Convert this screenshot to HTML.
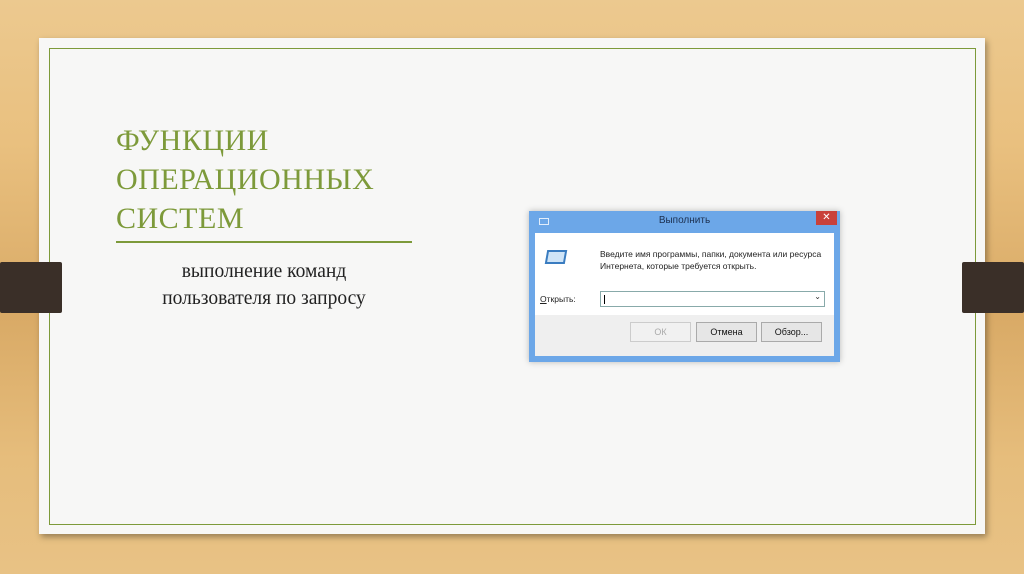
<!DOCTYPE html>
<html><head><meta charset="utf-8"><style>
body{margin:0;width:1024px;height:574px;overflow:hidden;position:relative;
background:linear-gradient(180deg,#ecc98f 0%,#e9c07f 25%,#d9aa66 55%,#e6bd7c 80%,#e8c285 100%);font-family:"Liberation Serif",serif}
.paper{position:absolute;left:39px;top:38px;width:946px;height:496px;background:#f7f7f6;box-shadow:2px 3px 6px rgba(0,0,0,.35)}
.inner{position:absolute;left:49px;top:48px;width:925px;height:475px;border:1.5px solid #7d9a3a}
.strap{position:absolute;top:262px;height:51px;width:62px;background:#3a2f28;border-radius:2px}
.title{position:absolute;left:116px;top:121px;color:#7d9a3a;font-size:30px;line-height:39px;letter-spacing:0.5px}
.rule{position:absolute;left:116px;top:241px;width:296px;height:2px;background:#7d9a3a}
.sub{position:absolute;left:116px;width:296px;top:258px;text-align:center;font-size:19.5px;line-height:27px;color:#222}
.dlg{position:absolute;left:529px;top:211px;width:311px;height:151px;background:#6ca7e8;box-shadow:0 0 6px rgba(0,0,0,.25);font-family:"Liberation Sans",sans-serif}
.body{position:absolute;left:6px;top:22px;width:299px;height:123px;background:#fff}
.foot{position:absolute;left:0;top:82px;width:299px;height:41px;background:#efefef}
.btn{position:absolute;top:111px;height:18px;border:1px solid #aaa;background:#e6e6e6;font-size:9px;text-align:center;line-height:18px;color:#111}
</style></head><body>
<div class="paper"></div>
<div class="inner"></div>
<div class="strap" style="left:0"></div>
<div class="strap" style="left:962px"></div>
<div class="title">ФУНКЦИИ<br>ОПЕРАЦИОННЫХ<br>СИСТЕМ</div>
<div class="rule"></div>
<div class="sub">выполнение команд<br>пользователя по запросу</div>
<div class="dlg">
 <div style="position:absolute;left:10px;top:7px;width:8px;height:5px;border:1px solid #fff;opacity:.8"></div>
 <div style="position:absolute;left:0;width:311px;top:4px;text-align:center;font-size:10px;color:#1b2f4f">Выполнить</div>
 <div style="position:absolute;left:287px;top:0;width:21px;height:14px;background:#c9413a;color:#fff;font-size:10px;text-align:center;line-height:14px">✕</div>
 <div class="body">
  <div class="foot"></div>
  <div style="position:absolute;left:11px;top:17px;width:16px;height:10px;border:2px solid #3a7cc0;transform:skewX(-10deg);background:#cfe4f7"></div>
  <div style="position:absolute;left:65px;top:15px;font-size:8.5px;line-height:12px;color:#222">Введите имя программы, папки, документа или ресурса<br>Интернета, которые требуется открыть.</div>
  <div style="position:absolute;left:5px;top:61px;font-size:8.5px;color:#222"><u>О</u>ткрыть:</div>
  <div style="position:absolute;left:65px;top:58px;width:223px;height:14px;border:1px solid #8aa;background:#fff"><div style="position:absolute;left:3px;top:3px;width:1px;height:9px;background:#000"></div><div style="position:absolute;right:3px;top:0;font-size:8px;color:#333">⌄</div></div>
 </div>
 <div class="btn" style="left:101px;width:59px;color:#aaa;background:#f1f1f1;border-color:#ccc">ОК</div>
 <div class="btn" style="left:167px;width:59px">Отмена</div>
 <div class="btn" style="left:232px;width:59px">Обзор...</div>
</div>
</body></html>
